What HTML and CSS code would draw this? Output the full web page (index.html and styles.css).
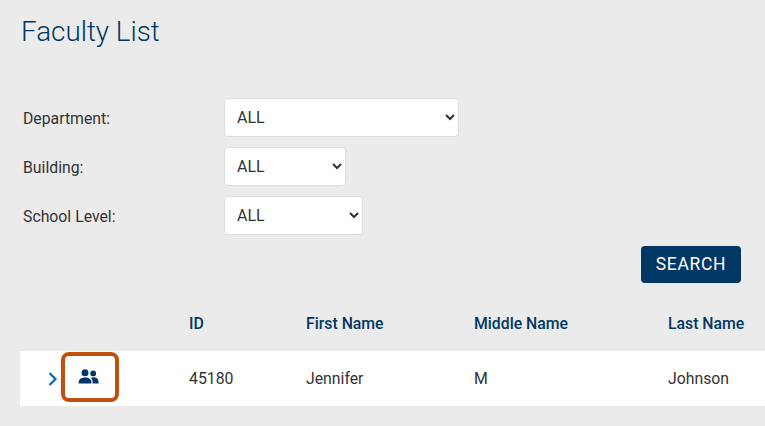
FILE: index.html
```html
<!DOCTYPE html>
<html>
<head>
    <meta charset="utf-8">
    <meta name="viewport" content="width=device-width, initial-scale=1">
    <title>Faculty List</title>
    <link rel="stylesheet" href="styles.css">
</head>

<body>
    <h1 class="title">Faculty List</h1>

    <form class="filters">
        <div class="filter-row">
            <label for="dept">Department:</label>
            <select id="dept" class="sel-dept"><option>ALL</option></select>
        </div>
        <div class="filter-row">
            <label for="bldg">Building:</label>
            <select id="bldg" class="sel-bldg"><option>ALL</option></select>
        </div>
        <div class="filter-row">
            <label for="level">School Level:</label>
            <select id="level" class="sel-level"><option>ALL</option></select>
        </div>
        <div class="search-row">
            <button type="button" class="search-btn">SEARCH</button>
        </div>
    </form>

    <div class="list">
        <div class="row head">
            <div></div>
            <div>ID</div>
            <div>First Name</div>
            <div>Middle Name</div>
            <div>Last Name</div>
        </div>
        <div class="row body-row">
            <div class="actions">
                <svg class="chevron" width="10" height="14" viewBox="0 0 10 14"><path d="M1.5 1 L7.5 7 L1.5 13" fill="none" stroke="#0b66b5" stroke-width="2.2"/></svg>
                <span class="icon-box">
                    <svg width="21" height="15" viewBox="0 0 21 15"><circle cx="7" cy="3.7" r="3.5" fill="#003764"/><circle cx="15.2" cy="4.4" r="2.9" fill="#003764"/><path d="M0.5 14.5 C0.5 10.4 2.8 8.4 7 8.4 C11.2 8.4 13.5 10.4 13.5 13.6 L13.5 14.5 Z" fill="#003764"/><path d="M14.6 14.5 L14.6 13 C14.6 11.4 14.1 10 13 9 C13.9 8.5 14.7 8.3 15.7 8.3 C18.7 8.3 20.5 10.2 20.5 13 L20.5 14.5 Z" fill="#003764"/></svg>
                </span>
            </div>
            <div>45180</div>
            <div>Jennifer</div>
            <div>M</div>
            <div>Johnson</div>
        </div>
    </div>
</body>
</html>
```

FILE: styles.css
```css
body{
    margin: 0;
    padding: 0 0 0 20px;
    background-color: #ebebeb;
    overflow: hidden;
    font-family: Roboto, "Liberation Sans", sans-serif;
    font-size: 15.8px;
    color: #333;}

.title{
    margin: 0;
    padding: 14px 0 0 1px;
    font-size: 27.8px;
    font-weight: 300;
    line-height: 36px;
    color: #003764;}

.filters{
    margin-top: 48px;
    display: flex;
    flex-direction: column;
    gap: 10px;}

.filter-row{
    display: flex;
    align-items: center;
    height: 39px;}

.filter-row label{
    width: 204px;
    padding: 1px 0 0 3px;
    box-sizing: border-box;}

select{
    height: 39px;
    padding: 0 8px;
    box-sizing: border-box;
    border: 1px solid #ddd;
    border-radius: 4px;
    background-color: #fff;
    color: #333;
    font-family: inherit;
    font-size: 16px;}

.sel-dept{width: 235px;}
.sel-bldg{width: 122px;}
.sel-level{width: 139px;}

.search-row{
    display: flex;
    justify-content: flex-end;
    width: 721px;
    margin-top: 1px;}

.search-btn{
    width: 100px;
    height: 37px;
    padding: 0 0 2px;
    border: none;
    border-radius: 4px;
    background-color: #003764;
    color: #fff;
    font-family: inherit;
    font-size: 17.5px;
    letter-spacing: 0.7px;}

.row{
    display: grid;
    grid-template-columns: 169px 117px 168px 194px 1fr;
    align-items: center;}

.head{
    height: 68px;
    padding-top: 12px;
    box-sizing: border-box;
    font-weight: 500;
    color: #003764;}

.body-row{
    height: 55px;
    background-color: #fff;
    box-shadow: 0 2px 2px -1px rgba(0,0,0,.18);}

.actions{
    display: flex;
    align-items: center;
    gap: 3px;
    padding-left: 28px;}

.icon-box{
    display: flex;
    align-items: center;
    justify-content: center;
    width: 58px;
    height: 50px;
    margin-top: -4px;
    padding-right: 3px;
    box-sizing: border-box;
    border: 4px solid #c0500f;
    border-radius: 8px;}
```
